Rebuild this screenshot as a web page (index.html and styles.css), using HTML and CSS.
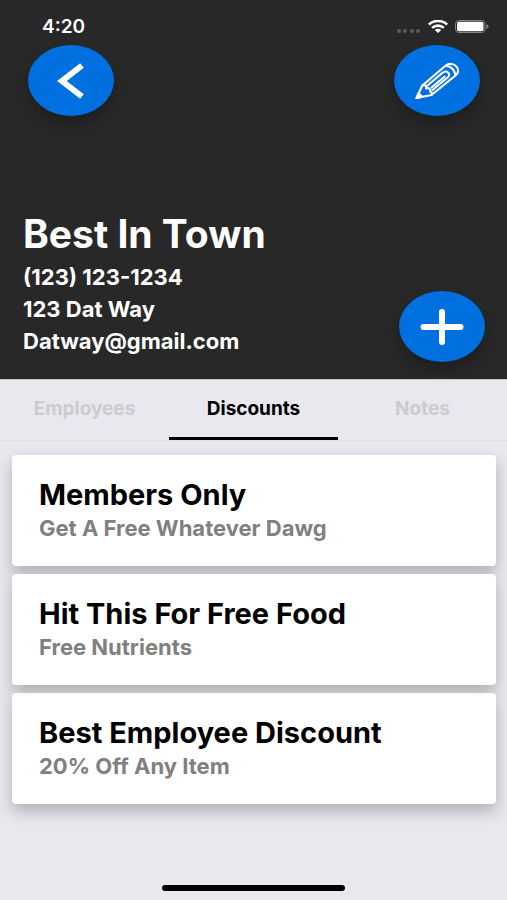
FILE: index.html
```html
<!DOCTYPE html>
<html lang="en">
<head>
    <meta charset="UTF-8">
    <meta name="viewport" content="width=device-width, initial-scale=1.0">
    <title>Best In Town</title>
    <link rel="stylesheet" href="styles.css">
</head>
<body>
    <header class="hero">
        <div class="status-bar">
            <span class="time">4:20</span>
            <div class="status-icons">
                <svg width="24" height="4" viewBox="0 0 24 4" fill="#5c5c5c">
                    <circle cx="2" cy="2" r="2"/>
                    <circle cx="8" cy="2" r="2"/>
                    <circle cx="15" cy="2" r="2"/>
                    <circle cx="21" cy="2" r="2"/>
                </svg>
                <svg class="wifi" width="20" height="13" viewBox="0 0 20 13" fill="none" stroke="#fff" stroke-width="2.6">
                    <path d="M0.8 4.5C6 -0.2 14 -0.2 19.2 4.5"/>
                    <path d="M4.1 7.9C7.5 4.9 12.5 4.9 15.9 7.9"/>
                    <path d="M6.8 10Q10 7.6 13.2 10L10 12.9Z" fill="#fff" stroke="none"/>
                </svg>
                <svg width="34" height="13" viewBox="0 0 34 13">
                    <rect x="0.5" y="0.5" width="29.5" height="12" rx="3.5" fill="none" stroke="#858585"/>
                    <rect x="2" y="1.8" width="26.5" height="9.4" rx="2" fill="#fff"/>
                    <path d="M31.4 4.2Q33.6 4.8 33.6 6.5T31.4 8.8Z" fill="#858585"/>
                </svg>
            </div>
        </div>
        <div class="hero-nav">
            <button class="round-button" aria-label="Back">
                <svg width="28" height="38" viewBox="0 0 28 38" fill="none" stroke="#fff" stroke-width="6">
                    <path d="M25 3.5L5 19L25 34.5"/>
                </svg>
            </button>
            <button class="round-button" aria-label="Edit">
                <svg width="46" height="38" viewBox="0 0 46 38" fill="none" stroke="#fff" stroke-width="2.1" stroke-linejoin="round" stroke-linecap="round">
                    <path d="M2.5 36L8.3 23.5L31.5 3.8C35 1 39.5 1.4 42.3 4.4C45.2 7.4 44.5 11 41.5 13.5L17.5 33Z"/>
                    <path d="M8.3 23.5C11.5 22.5 13 24 12 26.5C15 25.5 17 27 16 29.5C18 29.8 18.5 31.5 17.5 33"/>
                    <path d="M32.5 4C37.5 4.5 41 8.5 41.3 13"/>
                    <path d="M13.5 23.5L28.5 10.8C32.5 7.5 37.5 12 33.8 15.3L18.5 28"/>
                    <path d="M17.5 25.5L30.5 14.7"/>
                    <path d="M2.5 36L4.5 31.5L8 34.5Z" fill="#fff"/>
                </svg>
            </button>
        </div>
        <div class="hero-bottom">
            <div class="info">
                <h1>Best In Town</h1>
                <p>(123) 123-1234</p>
                <p>123 Dat Way</p>
                <p>Datway@gmail.com</p>
            </div>
            <button class="round-button" aria-label="Add discount">
                <svg width="44" height="38" viewBox="0 0 44 38" fill="none" stroke="#fff" stroke-width="6" stroke-linecap="round">
                    <path d="M22 4V34M3.5 19H40.5"/>
                </svg>
            </button>
        </div>
    </header>

    <nav class="tabs">
        <button class="tab">Employees</button>
        <button class="tab active">Discounts</button>
        <button class="tab">Notes</button>
    </nav>

    <main class="cards">
        <div class="card">
            <h2 class="card-title">Members Only</h2>
            <p class="card-description">Get A Free Whatever Dawg</p>
        </div>
        <div class="card">
            <h2 class="card-title">Hit This For Free Food</h2>
            <p class="card-description">Free Nutrients</p>
        </div>
        <div class="card">
            <h2 class="card-title">Best Employee Discount</h2>
            <p class="card-description">20% Off Any Item</p>
        </div>
    </main>

    <div class="home-indicator"></div>
</body>
</html>
```

FILE: styles.css
```css
* {
    box-sizing: border-box;
}
body {
    display: flex;
    flex-direction: column;
    min-height: 100vh;
    margin: 0;
    background-color: #e9e8ee;
    color: #000;
    font-family: Inter, Roboto, sans-serif;
    font-weight: 700;
}
h1,
h2,
p {
    margin: 0;
}
.hero {
    background-color: #282828;
    color: #fff;
    padding-bottom: 17px;
}
.status-bar {
    display: flex;
    justify-content: space-between;
    align-items: flex-end;
    height: 45px;
    padding: 0 18px 7px 42px;
}
.time {
    font-size: 19px;
    line-height: 22px;
    font-weight: 600;
}
.status-icons {
    display: flex;
    align-items: flex-end;
    gap: 7px;
    padding-bottom: 5px;
}
.hero-nav {
    display: flex;
    justify-content: space-between;
    padding: 0 27px 0 28px;
}
.round-button {
    display: flex;
    flex-shrink: 0;
    justify-content: center;
    align-items: center;
    width: 86px;
    height: 71px;
    padding: 0;
    border: none;
    border-radius: 50%;
    background-color: #0070e0;
    box-shadow: 0 8px 14px rgba(0, 0, 0, 0.25);
    cursor: pointer;
}
.hero-bottom {
    display: flex;
    justify-content: space-between;
    align-items: flex-end;
    margin-top: 95px;
    padding: 0 22px 0 23px;
}
.info {
    padding-bottom: 5px;
    font-size: 22px;
    line-height: 32px;
}
.info h1 {
    margin-bottom: 4px;
    font-size: 39px;
    line-height: 46px;
}
.tabs {
    display: flex;
    height: 62px;
    border-top: 1px solid #c8c8cc;
    border-bottom: 1px solid #dfdfe4;
}
.tab {
    flex: 1;
    padding: 0;
    border: none;
    border-bottom: 3px solid transparent;
    background: none;
    color: #cbcbd0;
    font-family: inherit;
    font-size: 19px;
    font-weight: 700;
    cursor: pointer;
}
.tab.active {
    border-bottom-color: #000;
    color: #000;
}
.cards {
    display: flex;
    flex-direction: column;
    gap: 8px;
    padding: 14px 11px 0 12px;
}
.card {
    padding: 22px 27px;
    border-radius: 4px;
    background-color: #fff;
    box-shadow: 0 7px 16px rgba(0, 0, 0, 0.25);
}
.card-title {
    font-size: 29px;
    line-height: 36px;
}
.card-description {
    color: #808080;
    font-size: 22px;
    line-height: 31px;
}
.home-indicator {
    align-self: center;
    width: 36%;
    height: 6px;
    margin: auto 0 9px;
    border-radius: 3px;
    background-color: #000;
}
```
